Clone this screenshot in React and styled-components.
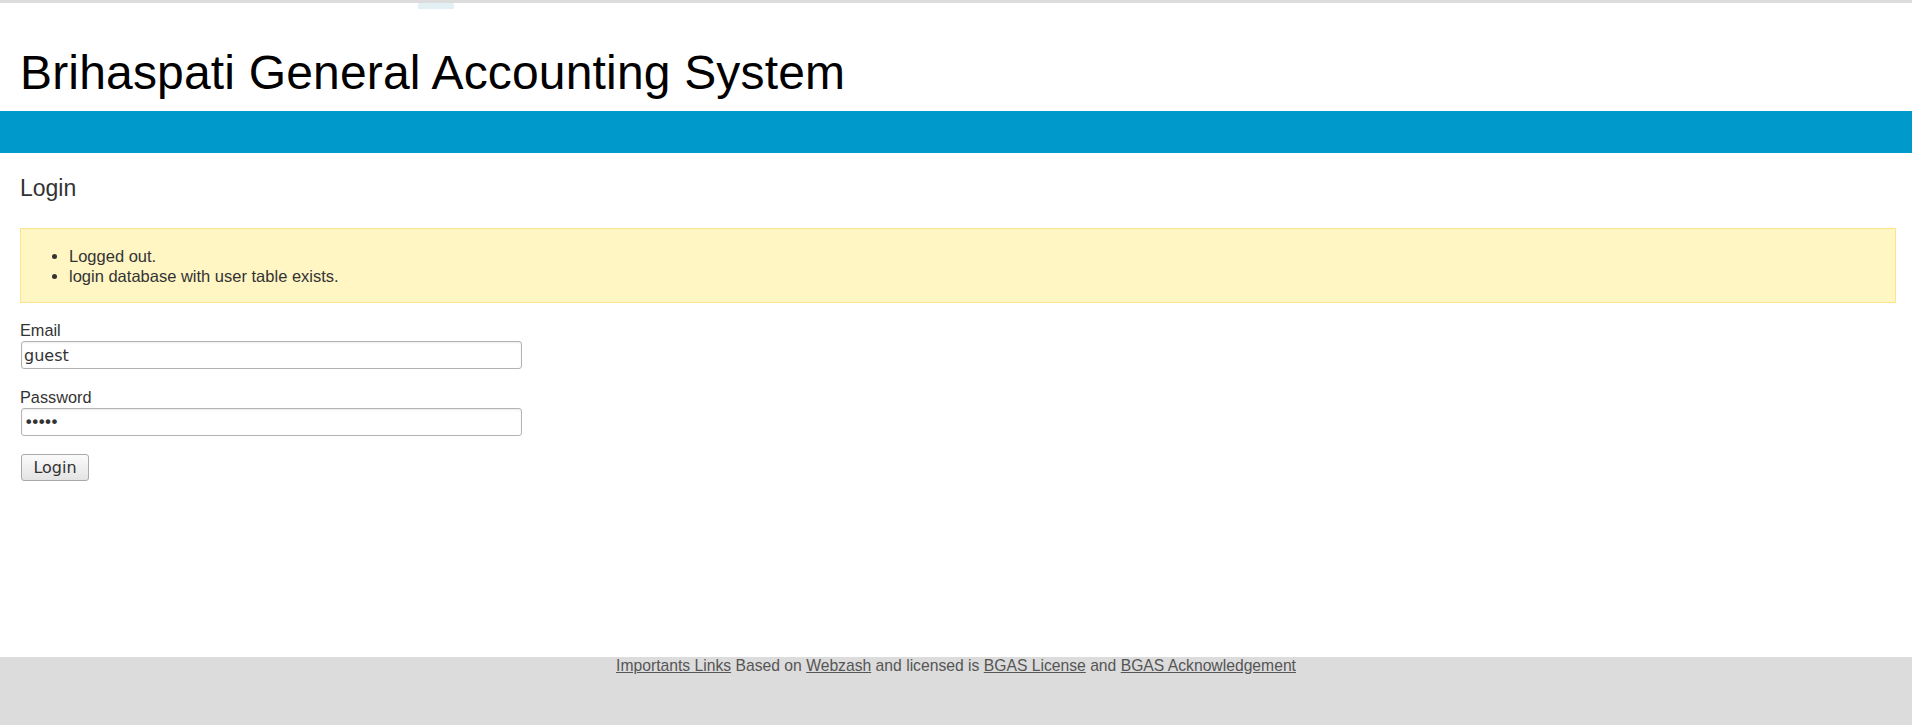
import styled, { createGlobalStyle } from 'styled-components'

const GlobalStyle = createGlobalStyle`
    html, body {
        margin: 0;
        padding: 0;
        background: #fff;
    }
    body {
        font-family: "Liberation Sans", Arial, sans-serif;
        font-size: 16px;
        color: #333;
    }
`

const Page = styled.div`
    min-height: 100vh;
    display: flex;
    flex-direction: column;
`

const TopStrip = styled.div`
    display: flex;
    height: 6px;
    padding-left: 418px;
    border-top: 3px solid #dcdcdc;
`

const TopMark = styled.div`
    width: 36px;
    height: 6px;
    background: #e3f0f4;
`

const Title = styled.h1`
    margin: 0;
    padding: 36px 20px 11px;
    font-size: 48px;
    font-weight: normal;
    line-height: 55px;
    letter-spacing: 0.17px;
    color: #000;
`

const NavBar = styled.div`
    height: 42px;
    background: #0099cc;
`

const Main = styled.main`
    flex: 1;
    padding: 23px 16px 0 20px;
`

const Heading = styled.h2`
    margin: 0;
    font-size: 23px;
    font-weight: normal;
    line-height: 25px;
    color: #333;
`

const Notice = styled.div`
    margin-top: 27px;
    padding: 17px 0 16px 48px;
    background: #fff6c4;
    border: 1px solid #fbe48d;
`

const NoticeList = styled.ul`
    margin: 0;
    padding: 0;
    font-size: 16.5px;
    line-height: 20px;
    color: #333;
`

const Form = styled.form`
    margin-top: 17px;
`

const Field = styled.div`
    display: flex;
    flex-direction: column;
    align-items: flex-start;
    margin-bottom: 18px;
`

const Label = styled.label`
    font-size: 16.3px;
    line-height: 20px;
    color: #333;
`

const TextInput = styled.input`
    box-sizing: border-box;
    width: 501px;
    height: 28px;
    margin: 1px 0 0 1px;
    padding: 0 2px;
    border: 1px solid #b3b3b3;
    border-radius: 3px;
    box-shadow: inset 0 1px 2px rgba(0, 0, 0, 0.08);
    font-family: "DejaVu Sans", sans-serif;
    font-size: 16px;
    letter-spacing: ${(props) => (props.type === 'password' ? '-3px' : 'normal')};
    color: #333;
    background: #fff;
    outline: none;
`

const Button = styled.button`
    box-sizing: border-box;
    width: 68px;
    height: 27px;
    margin: 0 0 0 1px;
    padding: 0;
    border: 1px solid #aaa;
    border-radius: 3px;
    background: linear-gradient(#fbfbfb, #e3e3e3);
    font-family: "DejaVu Sans", sans-serif;
    font-size: 16px;
    color: #333;
    cursor: pointer;
`

const Footer = styled.footer`
    height: 68px;
    background: #dcdcdc;
    text-align: center;
    font-size: 15.7px;
    line-height: 18px;
    color: #555;
`

const FooterLink = styled.a`
    color: #555;
    text-decoration: underline;
`

const App = () => {
    return (
        <Page>
            <GlobalStyle />
            <TopStrip>
                <TopMark />
            </TopStrip>
            <Title>Brihaspati General Accounting System</Title>
            <NavBar />

            <Main>
                <Heading>Login</Heading>
                <Notice>
                    <NoticeList>
                        <li>Logged out.</li>
                        <li>login database with user table exists.</li>
                    </NoticeList>
                </Notice>

                <Form onSubmit={(e) => e.preventDefault()}>
                    <Field>
                        <Label htmlFor="email">Email</Label>
                        <TextInput id="email" type="text" defaultValue="guest" />
                    </Field>
                    <Field>
                        <Label htmlFor="password">Password</Label>
                        <TextInput id="password" type="password" defaultValue="guest" />
                    </Field>
                    <Button type="submit">Login</Button>
                </Form>
            </Main>

            <Footer>
                <FooterLink href="#">Importants Links</FooterLink> Based on <FooterLink href="#">Webzash</FooterLink> and
                licensed is <FooterLink href="#">BGAS License</FooterLink> and{' '}
                <FooterLink href="#">BGAS Acknowledgement</FooterLink>
            </Footer>
        </Page>
    )
}

export default App
